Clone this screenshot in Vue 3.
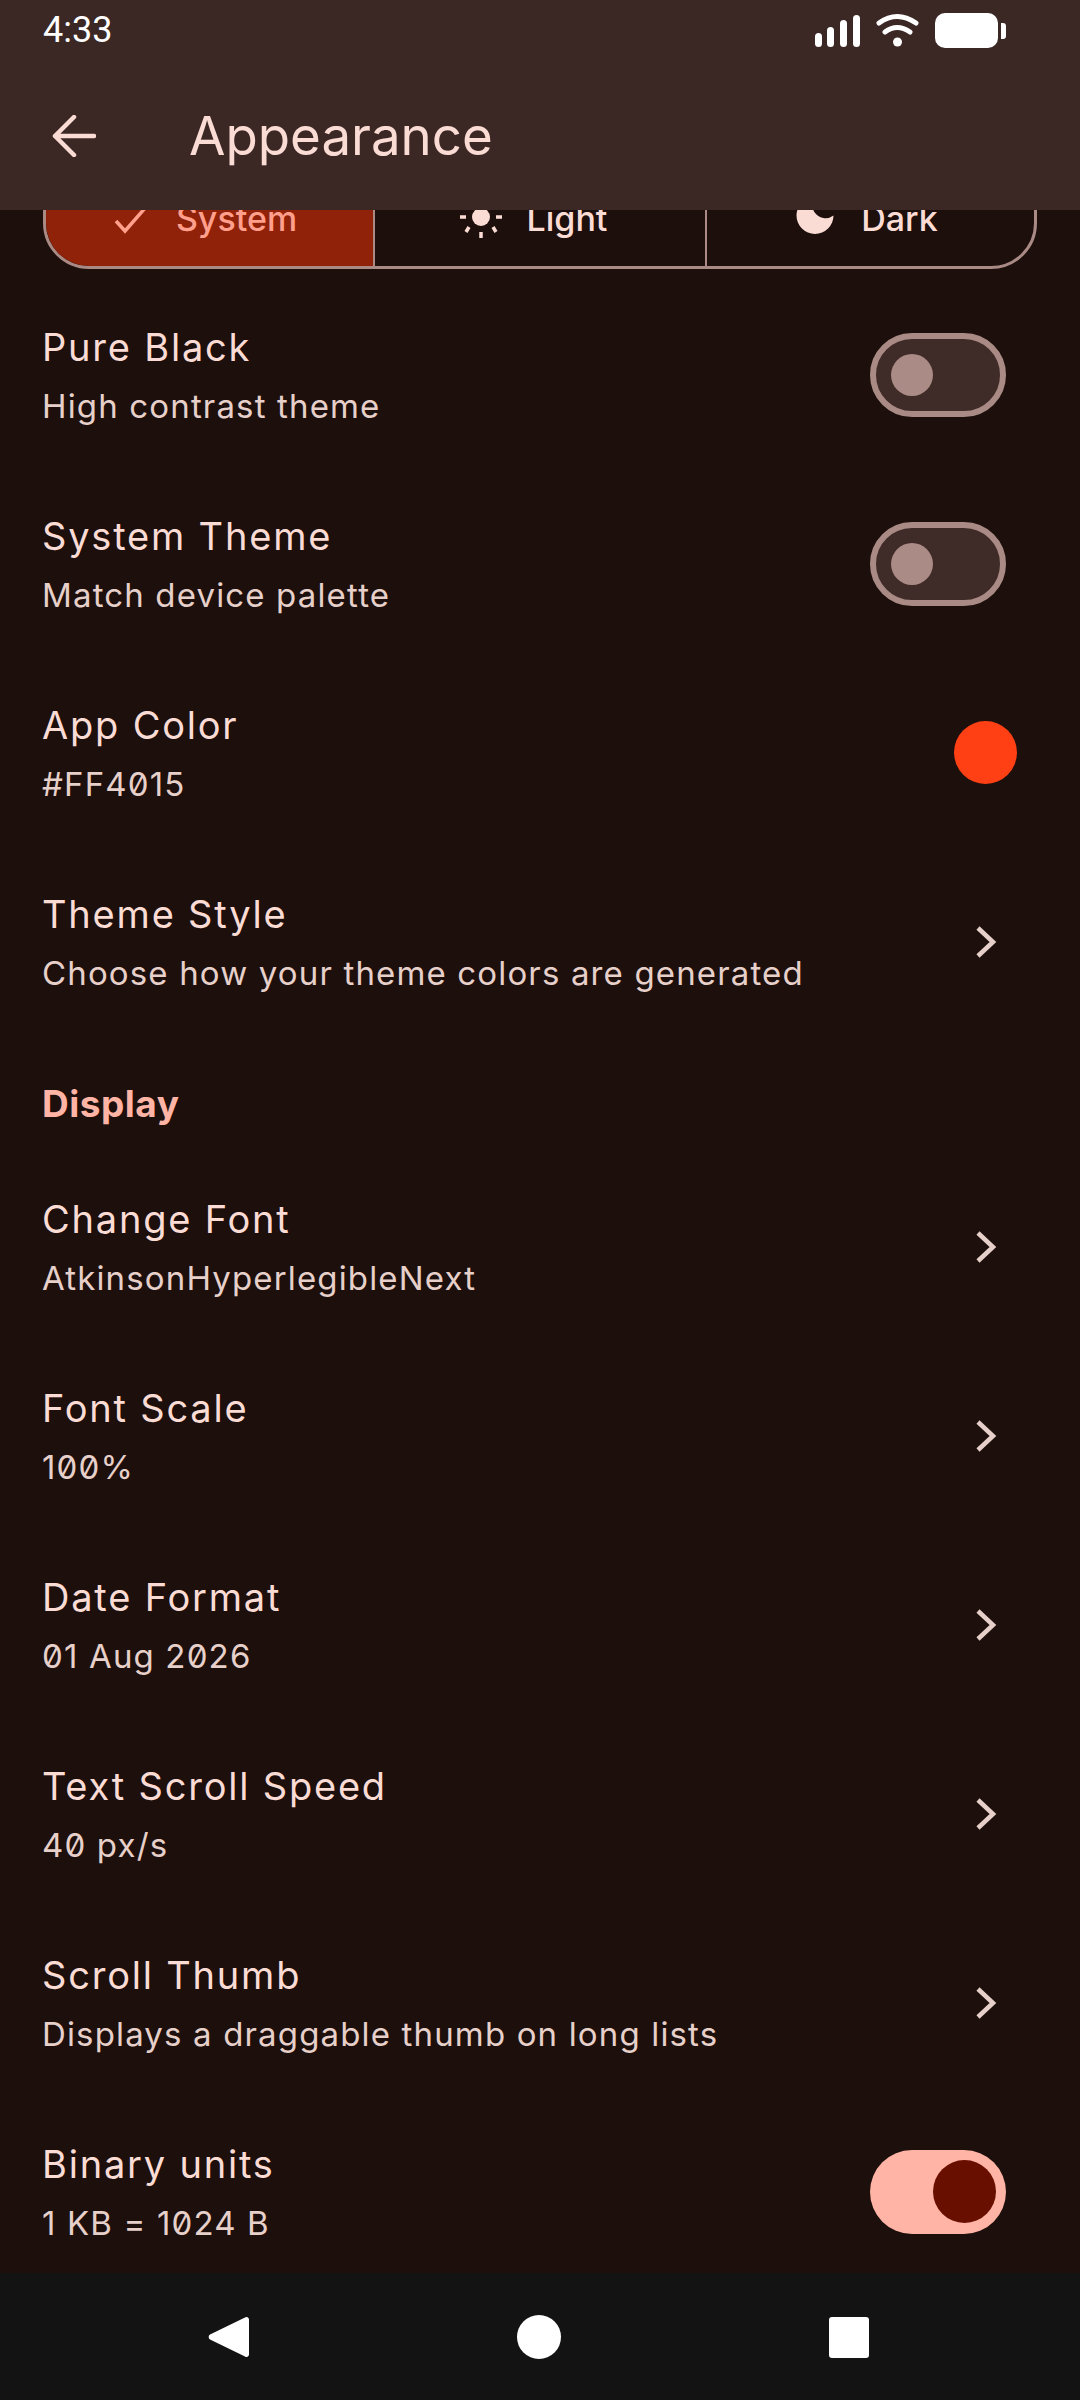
<template>
  <div class="screen">
    <!-- Top bar -->
    <header class="topbar">
      <div class="status">
        <span class="clock">4:33</span>
        <svg class="status-icons" width="191" height="36" viewBox="0 0 191 36">
          <rect x="0" y="20" width="7" height="14" rx="3.5" fill="#fff" />
          <rect x="12" y="14" width="7" height="20" rx="3.5" fill="#fff" />
          <rect x="25" y="7" width="7" height="27" rx="3.5" fill="#fff" />
          <rect x="38" y="2" width="7" height="32" rx="3.5" fill="#fff" />
          <path d="M64 10Q82 -3 101 10M70 19Q82 10 95 19" fill="none" stroke="#fff" stroke-width="5" stroke-linecap="round" />
          <circle cx="82.500" cy="29" r="4.500" fill="#fff" />
          <rect x="120" y="0" width="63" height="35" rx="10" fill="#fff" />
          <path d="M186 10h2a3 3 0 0 1 3 3v10a3 3 0 0 1-3 3h-2z" fill="#fff" />
        </svg>
      </div>
      <div class="appbar">
        <svg class="back" width="44" height="42" viewBox="0 0 44 42">
          <path d="M42 21H3M22 2 3 21l19 19" fill="none" stroke="#fbdcd5" stroke-width="4.500" stroke-linecap="round" stroke-linejoin="round" />
        </svg>
        <h1>Appearance</h1>
      </div>
    </header>

    <!-- Scrolled list -->
    <main class="list">
      <div class="segmented">
        <div class="seg selected">
          <svg width="44" height="44" viewBox="0 0 44 44">
            <path d="M8 23l9 10L38 9" fill="none" stroke="#ff9f8c" stroke-width="3.500" />
          </svg>
          <span>System</span>
        </div>
        <div class="seg">
          <svg width="44" height="44" viewBox="0 0 44 44">
            <circle cx="22" cy="19" r="9" fill="#fbdcd5" />
            <path d="M1 19h6M37 19h6M22 34v6M7 34l3-5M37 34l-3-5" stroke="#fbdcd5" stroke-width="3.500" />
          </svg>
          <span>Light</span>
        </div>
        <div class="seg">
          <svg width="44" height="44" viewBox="0 0 44 44">
            <path d="M22 -1A18.500 18.500 0 1 0 40.500 17.500 13.200 13.200 0 0 1 22 -1z" fill="#fbdcd5" />
          </svg>
          <span>Dark</span>
        </div>
      </div>

      <div v-for="item in themeRows" :key="item.title" class="row">
        <div class="text">
          <div class="title">{{ item.title }}</div>
          <div class="sub">{{ item.sub }}</div>
        </div>
        <div v-if="item.kind === 'toggle'" class="toggle" :class="{ on: item.on }"><span class="thumb"></span></div>
        <div v-else-if="item.kind === 'color'" class="swatch"></div>
        <svg v-else class="chevron" width="63" height="34" viewBox="0 0 63 34">
          <path d="M24 3 39 17 24 31" fill="none" stroke="#e7d0ca" stroke-width="4.500" />
        </svg>
      </div>

      <div class="section">Display</div>

      <div v-for="item in displayRows" :key="item.title" class="row">
        <div class="text">
          <div class="title">{{ item.title }}</div>
          <div class="sub">{{ item.sub }}</div>
        </div>
        <div v-if="item.kind === 'toggle'" class="toggle" :class="{ on: item.on }"><span class="thumb"></span></div>
        <svg v-else class="chevron" width="63" height="34" viewBox="0 0 63 34">
          <path d="M24 3 39 17 24 31" fill="none" stroke="#e7d0ca" stroke-width="4.500" />
        </svg>
      </div>
    </main>

    <!-- System nav -->
    <footer class="navbar">
      <svg width="41" height="44" viewBox="0 0 41 44"><path d="M37 2.500a2.500 2.500 0 0 1 4 2v35a2.500 2.500 0 0 1-4 2L2 24.500a3 3 0 0 1 0-5z" fill="#fff" /></svg>
      <span class="nav-circle"></span>
      <span class="nav-square"></span>
    </footer>
  </div>
</template>

<script setup>
const themeRows = [
  { title: 'Pure Black', sub: 'High contrast theme', kind: 'toggle' },
  { title: 'System Theme', sub: 'Match device palette', kind: 'toggle' },
  { title: 'App Color', sub: '#FF4015', kind: 'color' },
  { title: 'Theme Style', sub: 'Choose how your theme colors are generated', kind: 'link' }
]

const displayRows = [
  { title: 'Change Font', sub: 'AtkinsonHyperlegibleNext', kind: 'link' },
  { title: 'Font Scale', sub: '100%', kind: 'link' },
  { title: 'Date Format', sub: '01 Aug 2026', kind: 'link' },
  { title: 'Text Scroll Speed', sub: '40 px/s', kind: 'link' },
  { title: 'Scroll Thumb', sub: 'Displays a draggable thumb on long lists', kind: 'link' },
  { title: 'Binary units', sub: '1 KB = 1024 B', kind: 'toggle', on: true }
]
</script>

<style scoped>
.screen {
  width: 1080px;
  height: 2400px;
  display: flex;
  flex-direction: column;
  overflow: hidden;
  background: #1c0f0c;
  font-family: Inter, "Noto Sans", sans-serif;
  font-feature-settings: "zero";
}

/* top */
.topbar {
  flex: 0 0 210px;
  background: #3b2724;
  position: relative;
  z-index: 1;
}

.status {
  height: 62px;
  display: flex;
  align-items: center;
  justify-content: space-between;
  padding: 0 74px 0 43px;
}

.clock {
  font-family: Roboto, sans-serif;
  font-size: 36px;
  color: #fff;
  margin-top: -2px;
}

.status-icons {
  margin-top: -1px;
}

.appbar {
  height: 147px;
  display: flex;
  align-items: center;
  padding-left: 52px;
  gap: 93px;
}

.appbar h1 {
  margin: 0;
  font-size: 52.800px;
  font-weight: 400;
  color: #fbdcd5;
}

/* list */
.list {
  flex: 1;
  min-height: 0;
  overflow: hidden;
}

.segmented {
  height: 98px;
  box-sizing: border-box;
  margin: -39px 43px 11px;
  border: 3px solid #a98a84;
  border-radius: 0 0 46px 46px;
  display: grid;
  grid-template-columns: 327px 332px 1fr;
  overflow: hidden;
}

.seg {
  display: flex;
  align-items: center;
  justify-content: center;
  gap: 24px;
  padding-right: 14px;
  font-size: 34px;
  font-weight: 500;
  color: #fbdcd5;
  border-left: 2px solid #a98a84;
}

.seg span {
  margin-bottom: 3px;
}

.seg:first-child {
  border-left: 0;
}

.seg:last-child {
  padding-right: 10px;
}

.seg.selected {
  background: #8f2209;
  color: #ff9f8c;
}

.row {
  height: 189px;
  display: flex;
  align-items: center;
  justify-content: space-between;
  padding: 0 63px 0 42px;
}

.text {
  padding-top: 4px;
}

.title {
  font-size: 38px;
  line-height: 58px;
  letter-spacing: 1.800px;
  color: #fbdcd5;
}

.sub {
  font-size: 33px;
  line-height: 60px;
  letter-spacing: 1.150px;
  color: #e7d0ca;
}

.section {
  height: 116px;
  box-sizing: border-box;
  padding: 46px 42px 0;
  font-size: 37px;
  line-height: 44px;
  letter-spacing: 0.5px;
  font-weight: 700;
  color: #ffb4a5;
}

.toggle {
  width: 136px;
  height: 84px;
  box-sizing: border-box;
  margin-right: 11px;
  padding-left: 15px;
  display: flex;
  align-items: center;
  background: #3f2b27;
  border: 6px solid #a98a84;
  border-radius: 42px;
}

.thumb {
  width: 42px;
  height: 42px;
  border-radius: 50%;
  background: #ab8b85;
}

.toggle.on {
  background: #ffb4a5;
  border: 0;
  padding: 0 10px 0 0;
  justify-content: flex-end;
}

.toggle.on .thumb {
  width: 63px;
  height: 63px;
  background: #690f00;
}

.swatch {
  width: 63px;
  height: 63px;
  border-radius: 50%;
  background: #ff4015;
}

.navbar {
  flex: 0 0 127px;
  background: #131313;
  display: flex;
  align-items: flex-start;
  padding: 42px 211px 0 208px;
  justify-content: space-between;
  box-sizing: border-box;
}

.nav-circle {
  width: 44px;
  height: 44px;
  border-radius: 50%;
  background: #fff;
}

.nav-square {
  width: 40px;
  height: 41px;
  margin-top: 2px;
  border-radius: 3px;
  background: #fff;
}
</style>

<style>
body {
  background: #1c0f0c;
}
</style>
